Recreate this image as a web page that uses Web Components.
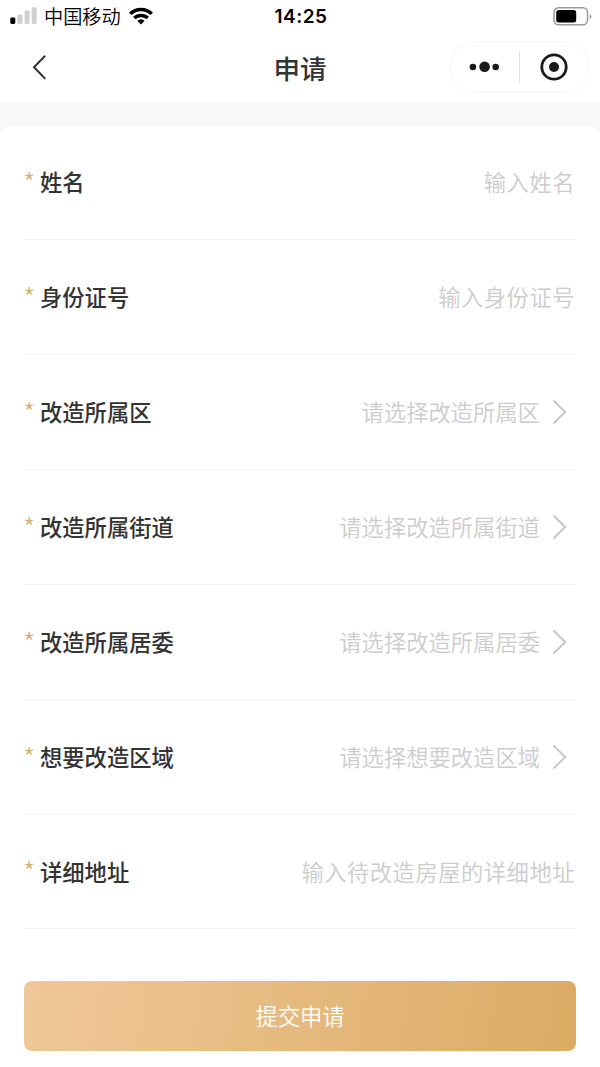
<!DOCTYPE html>
<html lang="zh-CN">
<head>
<meta charset="UTF-8">
<meta name="viewport" content="width=device-width, initial-scale=1">
<title>申请</title>
<style>
	body {
		margin: 0;
		background: #fff;
		color: #333;
		font-family: 'Noto Sans CJK SC', sans-serif;
		font-size: 22.3px;
	}
</style>
</head>
<body>
<apply-page>
	<status-bar slot="top" time="14:25">中国移动</status-bar>
	<nav-header slot="top">申请</nav-header>

	<form-field hint="输入姓名">姓名</form-field>
	<form-field hint="输入身份证号">身份证号</form-field>
	<form-field picker hint="请选择改造所属区">改造所属区</form-field>
	<form-field picker hint="请选择改造所属街道">改造所属街道</form-field>
	<form-field picker hint="请选择改造所属居委">改造所属居委</form-field>
	<form-field picker hint="请选择想要改造区域">想要改造区域</form-field>
	<form-field class="last" hint="输入待改造房屋的详细地址">详细地址</form-field>

	<submit-button slot="bottom">提交申请</submit-button>
</apply-page>

<script>
function render(el, html) {
	const shadow = el.attachShadow({ mode: 'open' })
	const template = document.createElement('template')
	template.innerHTML = html
	shadow.appendChild(template.content.cloneNode(true))
	return shadow
}

class ApplyPage extends HTMLElement {
	constructor() {
		super()

		render(this, `
		<style>
			:host {
				display: flex;
				flex-direction: column;
				height: 1067px;
				overflow: hidden;
			}

			main {
				flex: 1;
				padding-top: 23px;
				background: linear-gradient(#f8f8f8 60px, #fff 60px);
			}

			.card {
				display: flow-root;
				padding: 0 24px;
				border-radius: 10px 10px 0 0;
				background: #fff;
			}

			.bottom {
				padding-top: 52px;
			}

			slot:not([name]) {
				display: block;
				margin-top: -1px;
			}

			::slotted(.last) {
				--row-height: 114px;
			}
		</style>
		<slot name="top"></slot>
		<main>
			<div class="card">
				<slot></slot>
				<div class="bottom"><slot name="bottom"></slot></div>
			</div>
		</main>
		`)
	}
}

class StatusBar extends HTMLElement {
	constructor() {
		super()

		const shadow = render(this, `
		<style>
			:host {
				display: grid;
				grid-template-columns: 1fr auto 1fr;
				align-items: center;
				height: 33px;
				padding: 0 8px 0 10px;
				color: #000;
				font-size: 19.2px;
				line-height: 32px;
			}

			.carrier {
				display: flex;
				align-items: center;
				gap: 7px;
				padding-bottom: 2px;
			}

			.carrier span {
				font-weight: 350;
			}

			.carrier .wifi {
				margin-left: 1px;
			}

			.time {
				font: 600 19px/32px Inter, sans-serif;
				letter-spacing: 0.45px;
			}

			.battery {
				justify-self: end;
				margin-bottom: 2px;
			}

			svg {
				display: block;
			}
		</style>
		<div class="carrier">
			<svg width="27" height="18" viewBox="0 0 27 18">
				<rect x="0.3" y="10.6" width="5" height="6.3" rx="1.3" fill="#000"/>
				<g fill="#d0d0d0">
					<rect x="7.4" y="7.6" width="5" height="9.3" rx="1.3"/>
					<rect x="14.6" y="3.6" width="5" height="13.3" rx="1.3"/>
					<rect x="21.7" y="0.3" width="5" height="16.6" rx="1.3"/>
				</g>
			</svg>
			<span><slot></slot></span>
			<svg class="wifi" width="24" height="18" viewBox="0 0 24 18">
				<g fill="none" stroke="#000" stroke-width="3.5">
					<path d="M1.2 6.8C7.2 .9 16.8 .9 22.8 6.8"/>
					<path d="M5.3 11C9 7.5 15 7.5 18.7 11"/>
				</g>
				<path d="M8.3 13.8Q12 10.7 15.7 13.8L12 17.5Z"/>
			</svg>
		</div>
		<div class="time"></div>
		<svg class="battery" width="39" height="19" viewBox="0 0 39 19">
			<rect x="1" y="0.8" width="33.5" height="17" rx="4.5" fill="none" stroke="#999" stroke-width="1.5"/>
			<rect x="3.2" y="3" width="20" height="12.6" rx="2.5" fill="#000"/>
			<path d="M36.7 7Q38.4 7.6 38.4 9.5T36.7 12Z" fill="#999"/>
		</svg>
		`)

		shadow.querySelector('.time').textContent = this.getAttribute('time')
	}
}

class NavHeader extends HTMLElement {
	constructor() {
		super()

		render(this, `
		<style>
			:host {
				display: grid;
				grid-template-columns: 1fr auto 1fr;
				align-items: center;
				box-sizing: border-box;
				height: 70px;
				padding: 0 11px;
			}

			h1 {
				margin: 0;
				font-size: 26.5px;
				font-weight: 500;
				line-height: 70px;
			}

			svg {
				display: block;
			}

			.back {
				margin: 0 0 2px 21px;
			}

			.capsule {
				justify-self: end;
				display: grid;
				grid-template-columns: 1fr 1px 1fr;
				align-items: center;
				justify-items: center;
				box-sizing: border-box;
				width: 140px;
				height: 52px;
				margin-bottom: 2px;
				border: 1px solid #f5f5f5;
				border-radius: 26px;
			}

			.line {
				width: 1px;
				height: 32px;
				background: #e2e2e2;
			}
		</style>
		<svg class="back" width="15" height="26" viewBox="0 0 15 26">
			<path d="M13.2 1.7 2 13.2 13.2 24.7" fill="none" stroke="#333" stroke-width="2"/>
		</svg>
		<h1><slot></slot></h1>
		<div class="capsule">
			<svg width="30" height="12" viewBox="0 0 30 12" fill="#1a1a1a">
				<circle cx="3.9" cy="6" r="3.3"/>
				<circle cx="15.6" cy="5.7" r="5.3"/>
				<circle cx="26.7" cy="6" r="3.3"/>
			</svg>
			<div class="line"></div>
			<svg width="28" height="28" viewBox="0 0 28 28">
				<circle cx="14" cy="14" r="12.2" fill="none" stroke="#1a1a1a" stroke-width="2.8"/>
				<circle cx="14" cy="14" r="5" fill="#1a1a1a"/>
			</svg>
		</div>
		`)
	}
}

class FormField extends HTMLElement {
	constructor() {
		super()

		const shadow = render(this, `
		<style>
			:host {
				display: flex;
				align-items: center;
				box-sizing: border-box;
				height: var(--row-height, 115px);
				border-bottom: 1px solid #f4f4f4;
				line-height: 32px;
			}

			span {
				padding-bottom: 2px;
			}

			.star {
				width: 17px;
				margin-left: -1px;
				padding-bottom: 1px;
				color: #d3b176;
				font-size: 28px;
				font-weight: 300;
			}

			.label {
				font-weight: 500;
			}

			.hint {
				margin: 0 1px 0 auto;
				color: #ccc;
				font-weight: 350;
				letter-spacing: 0.5px;
			}

			.arrow {
				display: none;
				margin: 0 9px 0 11px;
			}

			:host([picker]) .hint {
				letter-spacing: 0;
			}

			:host([picker]) .arrow {
				display: block;
			}
		</style>
		<span class="star">*</span>
		<span class="label"><slot></slot></span>
		<span class="hint"></span>
		<svg class="arrow" width="15" height="26" viewBox="0 0 15 26">
			<path d="M1.5 1.5 13.2 13 1.5 24.5" fill="none" stroke="#c8c8c8" stroke-width="2"/>
		</svg>
		`)

		shadow.querySelector('.hint').textContent = this.getAttribute('hint')
	}
}

class SubmitButton extends HTMLElement {
	constructor() {
		super()

		render(this, `
		<style>
			:host {
				display: block;
			}

			button {
				display: block;
				width: 100%;
				height: 70px;
				padding: 0 0 2px;
				border: 0;
				border-radius: 8px;
				background: linear-gradient(100deg, #f0c899, #dbab63);
				color: #fff;
				font: inherit;
				font-weight: 350;
				line-height: 68px;
			}
		</style>
		<button type="button"><slot></slot></button>
		`)
	}
}

customElements.define('apply-page', ApplyPage)
customElements.define('status-bar', StatusBar)
customElements.define('nav-header', NavHeader)
customElements.define('form-field', FormField)
customElements.define('submit-button', SubmitButton)
</script>
</body>
</html>
